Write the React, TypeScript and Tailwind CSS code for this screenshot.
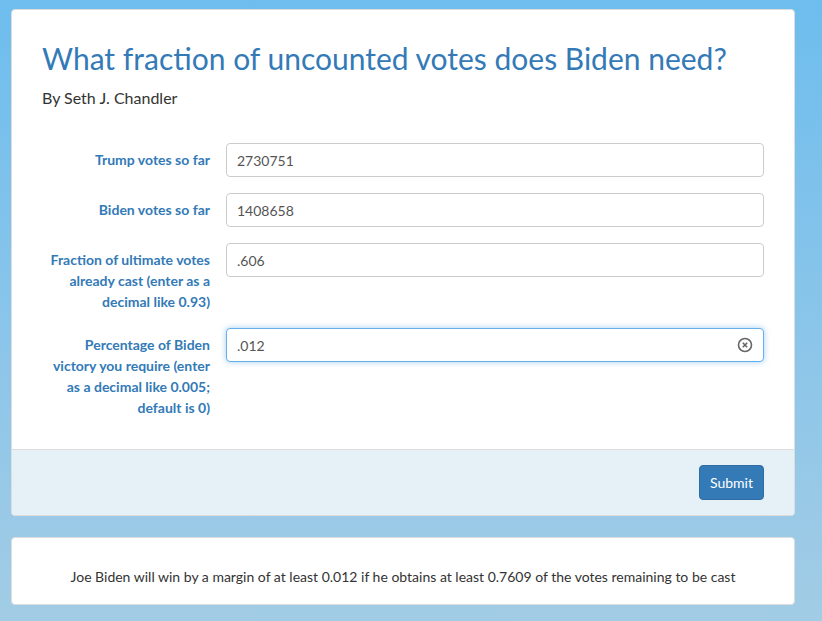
import { useState } from 'react'

const Field = ({
  label,
  value,
  focused,
}: {
  label: string
  value: string
  focused?: boolean
}) => {
  const [val, setVal] = useState(value)
  return (
    <div className="flex items-start gap-[16px] mb-[16px]">
      <label className="w-[168px] shrink-0 text-right font-bold text-[14px] leading-[21px] text-[#337ab7] pt-[6px]">
        {label}
      </label>
      <div className="relative flex-1">
        <input
          value={val}
          onChange={(e) => setVal(e.target.value)}
          className={`w-full h-[34px] rounded-[4px] bg-white px-[10px] text-[14px] text-[#555] outline-none ${
            focused
              ? 'border border-[#66afe9] shadow-[0_0_6px_rgba(102,175,233,0.6)]'
              : 'border border-[#ccc]'
          }`}
        />
        {focused && (
          <svg
            className="absolute right-[11px] top-[9px]"
            width="16"
            height="16"
            viewBox="0 0 16 16"
            fill="none"
            stroke="#666"
            strokeWidth="1.6"
          >
            <circle cx="8" cy="8" r="6.5" />
            <path d="M5.8 5.8l4.4 4.4M10.2 5.8l-4.4 4.4" />
          </svg>
        )}
      </div>
    </div>
  )
}

const App = () => {
  return (
    <div
      className="min-h-[621px] w-full bg-gradient-to-b from-[#6dbdee] to-[#a2cce5] pt-[9px] px-[11px] pb-[17px] text-[#333]"
      style={{ fontFamily: 'Lato, "Noto Sans", sans-serif' }}
    >
      <div className="w-[784px]">
        <div className="bg-white rounded-[4px] border border-[#ddd] overflow-hidden">
          <div className="px-[30px] pt-[28px] pb-[15px]">
            <h1 className="text-[30px] leading-[40px] text-[#337ab7] font-normal">
              What fraction of uncounted votes does Biden need?
            </h1>
            <p className="text-[16px] leading-[22px] mt-[9px] text-[#333]">By Seth J. Chandler</p>
            <div className="mt-[34px]">
              <Field label="Trump votes so far" value="2730751" />
              <Field label="Biden votes so far" value="1408658" />
              <Field
                label="Fraction of ultimate votes already cast (enter as a decimal like 0.93)"
                value=".606"
              />
              <Field
                label="Percentage of Biden victory you require (enter as a decimal like 0.005; default is 0)"
                value=".012"
                focused
              />
            </div>
          </div>
          <div className="bg-[#e5f0f7] border-t border-[#ddd] h-[66px] flex items-center justify-end pr-[30px]">
            <button className="bg-[#337ab7] border border-[#2e6da4] text-white text-[14px] rounded-[4px] h-[35px] px-[10px]">
              Submit
            </button>
          </div>
        </div>
        <div className="mt-[21px] bg-white rounded-[4px] border border-[#ddd] h-[68px] flex items-end justify-center pb-[17px]">
          <p className="text-[14px] text-[#333]">
            Joe Biden will win by a margin of at least 0.012 if he obtains at least 0.7609 of the
            votes remaining to be cast
          </p>
        </div>
      </div>
    </div>
  )
}

export default App
